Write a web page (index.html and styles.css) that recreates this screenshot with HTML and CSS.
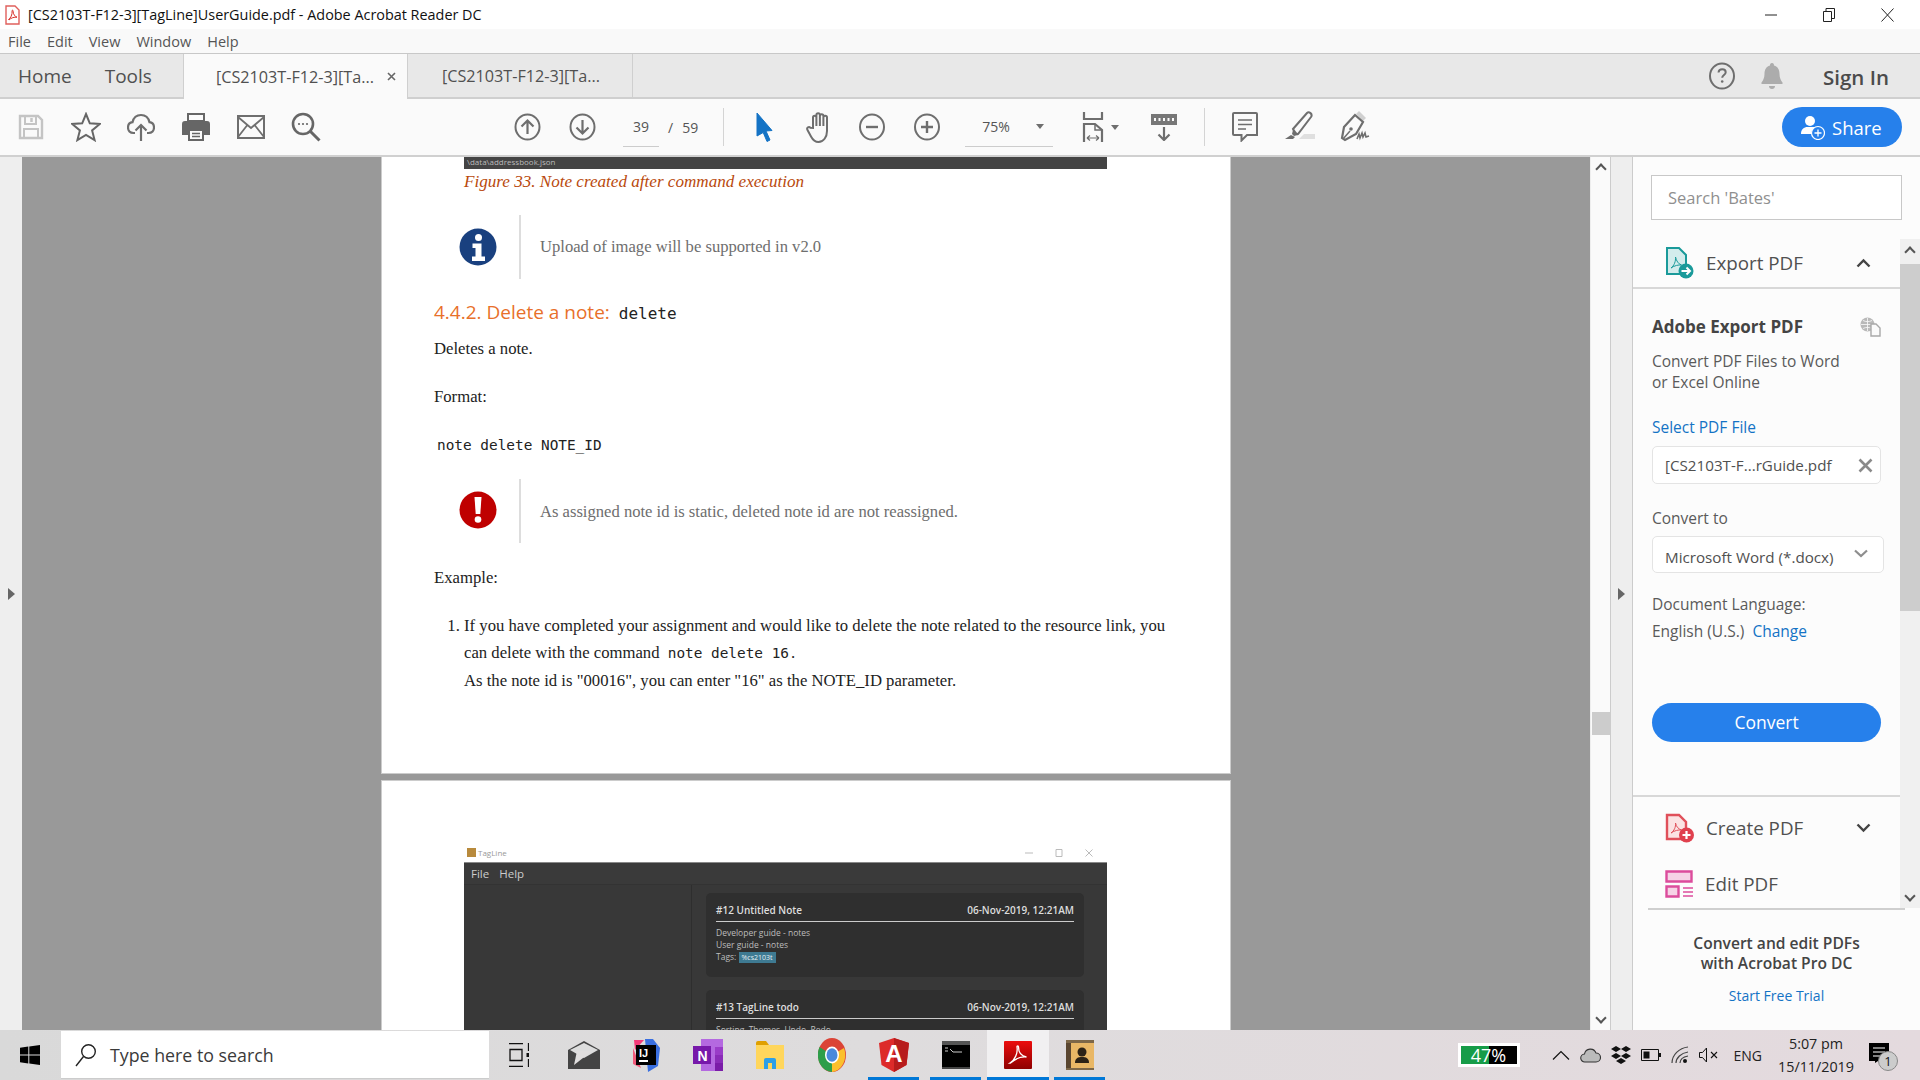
FILE: index.html
```html
<!DOCTYPE html>
<html lang="en">
<head>
    <meta charset="UTF-8">
    <title>[CS2103T-F12-3][TagLine]UserGuide.pdf - Adobe Acrobat Reader DC</title>
    <link rel="stylesheet" href="styles.css">
</head>
<body>
    <!-- Title bar -->
    <div class="titlebar">
        <svg class="app-icon" width="15" height="20" viewBox="0 0 15 20"><path d="M1 1h9l4 4v14H1z" fill="#fff" stroke="#e0605c" stroke-width="1.4"/><path d="M3.5 14.5c2-1 4-5 3.6-8.5-.2-1.200 1-1.200 1 .2 0 3 2 5.500 3.900 6-2.500-.3-6 .5-8 2.800z" fill="none" stroke="#d8322c" stroke-width="1"/></svg>
        <span class="title-text">[CS2103T-F12-3][TagLine]UserGuide.pdf - Adobe Acrobat Reader DC</span>
        <div class="win-controls">
            <svg width="12" height="12" viewBox="0 0 12 12"><path d="M0 6h12" stroke="#222" stroke-width="1"/></svg>
            <svg width="12" height="14" viewBox="0 0 12 14"><path d="M.5 3.500h8v10h-8zM3 3.500V.5h8.500v10H8.500" fill="none" stroke="#222"/></svg>
            <svg width="13" height="14" viewBox="0 0 13 14"><path d="M.5 .5l12 13M12.500 .5l-12 13" stroke="#222" stroke-width="1"/></svg>
        </div>
    </div>

    <!-- Menu bar -->
    <div class="menubar">
        <span>File</span><span>Edit</span><span>View</span><span>Window</span><span>Help</span>
    </div>

    <!-- Tab bar -->
    <div class="tabbar">
        <span class="nav-tab nav-home">Home</span>
        <span class="nav-tab nav-tools">Tools</span>
        <div class="doc-tab active">
            <span>[CS2103T-F12-3][Ta...</span>
            <svg class="tab-close" width="9" height="9" viewBox="0 0 9 9"><path d="M1 1l7 7M8 1l-7 7" stroke="#666" stroke-width="1.600"/></svg>
        </div>
        <div class="doc-tab second"><span>[CS2103T-F12-3][Ta...</span></div>
        <div class="tab-right">
            <svg width="26" height="28" viewBox="0 0 26 28"><ellipse cx="13" cy="14" rx="12" ry="12.500" fill="none" stroke="#6e6e6e" stroke-width="2"/><path d="M9.500 10.500c.3-2.500 2-3.300 3.700-3.300 2 0 3.500 1.200 3.500 3 0 2.800-3.500 2.800-3.500 5.600" fill="none" stroke="#6e6e6e" stroke-width="2"/><circle cx="13.200" cy="19.500" r="1.300" fill="#6e6e6e"/></svg>
            <svg class="bell" width="22" height="26" viewBox="0 0 22 26"><path d="M11 0c1.500 0 2 1 2 2.500 4 1 5.500 4.500 5.500 8.500 0 4 1.500 6.500 3 8.500v1.500H.5v-1.500c1.500-2 3-4.500 3-8.500S5 3.500 9 2.500C9 1 9.500 0 11 0zM8 23h6c0 2-1.300 3-3 3s-3-1-3-3z" fill="#a9a9a9"/></svg>
            <span class="sign-in">Sign In</span>
        </div>
    </div>

    <!-- Toolbar -->
    <div class="toolbar">
        <div class="tool-group">
            <span class="tool"><svg width="26" height="26" viewBox="0 0 26 26"><path d="M2 2h18l4 4v18H2z" fill="none" stroke="#c4c4c4" stroke-width="2.400"/><path d="M7 2v8h11V2M6 24v-9h14v9" fill="none" stroke="#c4c4c4" stroke-width="2"/><path d="M13.500 4v4" stroke="#c4c4c4" stroke-width="2.500"/></svg></span>
            <span class="tool"><svg width="30" height="30" viewBox="0 0 30 30"><path d="M15 2l3.800 9.300 10 .7-7.700 6.400 2.500 9.700L15 22.800l-8.600 5.300 2.500-9.700L1.200 12l10-.7z" fill="none" stroke="#666" stroke-width="2"/></svg></span>
            <span class="tool"><svg width="28" height="30" viewBox="0 0 28 30"><path d="M8 21H6.500C3 21 1 18.500 1 15.500c0-3 2-5 4.500-5.300C6.500 6 9.500 3 14 3s7.500 3 8.500 7.200c2.500.3 4.500 2.300 4.500 5.300s-2 5.500-5.500 5.500H20" fill="none" stroke="#6e6e6e" stroke-width="2.200"/><path d="M14 29V13M8.500 18.500L14 13l5.500 5.500" fill="none" stroke="#6e6e6e" stroke-width="2.200"/></svg></span>
            <span class="tool"><svg width="28" height="28" viewBox="0 0 28 28"><path d="M6 1h16v7H6z" fill="none" stroke="#666" stroke-width="2"/><path d="M3 8h22a3 3 0 0 1 3 3v11h-6v-6H6v6H0V11a3 3 0 0 1 3-3z" fill="#666"/><path d="M7 17h14v10H7z" fill="#fafafa" stroke="#666" stroke-width="2"/><path d="M10 20.500h8M10 23.500h8" stroke="#666" stroke-width="1.500"/></svg></span>
            <span class="tool"><svg width="28" height="24" viewBox="0 0 28 24"><path d="M1 1h26v22H1z" fill="none" stroke="#6e6e6e" stroke-width="2"/><path d="M1 2l13 11L27 2M1 22l9-11.500M27 22l-9-11.500" fill="none" stroke="#6e6e6e" stroke-width="1.800"/></svg></span>
            <span class="tool"><svg width="30" height="30" viewBox="0 0 30 30"><circle cx="12" cy="12" r="10" fill="none" stroke="#666" stroke-width="2.600"/><path d="M19 19l9.500 9.500" stroke="#666" stroke-width="3"/><circle cx="8" cy="12" r="1.100" fill="#666"/><circle cx="12" cy="12" r="1.100" fill="#666"/><circle cx="16" cy="12" r="1.100" fill="#666"/></svg></span>
        </div>
        <div class="tool-group page-nav">
            <span class="tool"><svg width="27" height="28" viewBox="0 0 27 28"><ellipse cx="13.500" cy="14" rx="12" ry="12.500" fill="none" stroke="#6e6e6e" stroke-width="2"/><path d="M13.500 21V7.500M7.500 13.500l6-6 6 6" fill="none" stroke="#6e6e6e" stroke-width="2.200"/></svg></span>
            <span class="tool"><svg width="27" height="28" viewBox="0 0 27 28"><ellipse cx="13.500" cy="14" rx="12" ry="12.500" fill="none" stroke="#6e6e6e" stroke-width="2"/><path d="M13.500 7v13.500M7.500 14.500l6 6 6-6" fill="none" stroke="#6e6e6e" stroke-width="2.200"/></svg></span>
            <span class="page-input">39</span>
            <span class="page-slash">/</span>
            <span class="page-total">59</span>
        </div>
        <span class="tool-sep first"></span>
        <div class="tool-group view-tools">
            <span class="tool"><svg width="18" height="30" viewBox="0 0 18 30"><path d="M1 1l15 17.500-6 .5 4 9-3 1.500-3.800-9L1 24z" fill="#1473c5" stroke="#1473c5" stroke-linejoin="round"/></svg></span>
            <span class="tool"><svg width="28" height="32" viewBox="0 0 28 32"><path d="M7 17V6.500c0-2.500 3.400-2.500 3.400 0V4c0-2.500 3.500-2.500 3.500 0v1c0-2.500 3.500-2.500 3.500 0v1.500c0-2.500 3.600-2.500 3.600 0V20c0 6-3.500 11-8.500 11-4 0-5.500-1.800-7.500-5.500L1.500 19c-1.300-2.500 1.500-4 3-2.200zM10.400 6.500V15M13.900 5v10M17.400 6.500V15" fill="none" stroke="#6e6e6e" stroke-width="2"/></svg></span>
            <span class="tool tool-minus"><svg width="26" height="28" viewBox="0 0 26 28"><ellipse cx="13" cy="14" rx="12" ry="12.500" fill="none" stroke="#6e6e6e" stroke-width="2"/><path d="M7 14h12" stroke="#6e6e6e" stroke-width="2.400"/></svg></span>
            <span class="tool"><svg width="26" height="28" viewBox="0 0 26 28"><ellipse cx="13" cy="14" rx="12" ry="12.500" fill="none" stroke="#6e6e6e" stroke-width="2"/><path d="M7 14h12M13 8v12" stroke="#6e6e6e" stroke-width="2.400"/></svg></span>
        </div>
        <div class="zoom-select"><span>75%</span><i class="caret"></i></div>
        <span class="fit-tool"><svg width="22" height="30" viewBox="0 0 22 30"><path d="M2 0v7h18V0" fill="none" stroke="#6e6e6e" stroke-width="2.200"/><path d="M2 30V12h11l7 6v12" fill="none" stroke="#6e6e6e" stroke-width="2.200"/><path d="M13 12v6h7" fill="none" stroke="#6e6e6e" stroke-width="1.500"/><path d="M5 26h12M5 26l3-2.500M5 26l3 2.500M17 26l-3-2.500M17 26l-3 2.500" fill="none" stroke="#6e6e6e" stroke-width="1.200"/></svg><i class="caret"></i></span>
        <span class="tool read-tool"><svg width="28" height="28" viewBox="0 0 28 28"><path d="M1 1h26v11H1z" fill="#777"/><path d="M5 5v3M9.500 5v3M14 5v3M18.500 5v3M23 5v3" stroke="#fafafa" stroke-width="2"/><path d="M14 14v13M8.500 21.500L14 27l5.500-5.500" fill="none" stroke="#6e6e6e" stroke-width="2.200"/></svg></span>
        <span class="tool-sep"></span>
        <div class="tool-group comment-tools">
            <span class="tool"><svg width="26" height="30" viewBox="0 0 26 30"><path d="M2 1h22a1 1 0 0 1 1 1v21H15l-5.500 5.500V23H2a1 1 0 0 1-1-1V2a1 1 0 0 1 1-1z" fill="none" stroke="#6e6e6e" stroke-width="2"/><path d="M6 8h14M6 12.500h14M6 17h8" stroke="#6e6e6e" stroke-width="1.500"/></svg></span>
            <span class="tool"><svg width="30" height="32" viewBox="0 0 30 32"><path d="M14 28h16v-5H19z" fill="#dfdfdf"/><path d="M8 18L22 2c2-2 6 1 4 4L13 23c-1 1-4-3-5-5z" fill="#fafafa" stroke="#6e6e6e" stroke-width="2"/><path d="M8 19l-1 4 2 2 4-1" fill="#6e6e6e"/><path d="M6 24l-6 4h8l2-2z" fill="#6e6e6e"/></svg></span>
            <span class="tool"><svg width="30" height="32" viewBox="0 0 30 32"><path d="M19 0l7 7-3 3-7-7z" fill="#d0d0d0"/><path d="M15 4l8 7-7 12-11 6-3-2L4 16z" fill="none" stroke="#6e6e6e" stroke-width="2.200"/><circle cx="11" cy="18" r="1.800" fill="#6e6e6e"/><path d="M3 28l7-8" stroke="#6e6e6e" stroke-width="1.500"/><path d="M17 28l2-5 1 4 2-5 1 4 2-4 1 4 3-1" fill="none" stroke="#6e6e6e" stroke-width="1.600"/></svg></span>
        </div>
        <div class="share-btn">
            <svg width="24" height="25" viewBox="0 0 24 25"><circle cx="9" cy="6" r="5" fill="#fff"/><path d="M0 19c0-5 3-6 5-7h8c1.500.6 2.500 1.300 3 2.500A7 7 0 0 0 11 19z" fill="#fff"/><circle cx="17" cy="18" r="6.500" fill="#2680eb" stroke="#fff" stroke-width="1.200"/><path d="M17 14.500v7M13.500 18h7" stroke="#fff" stroke-width="1.300"/></svg>
            <span>Share</span>
        </div>
    </div>

    <!-- Main area -->
    <div class="main">
        <div class="rail"><i class="arrow-right"></i></div>

        <div class="viewer">
            <div class="page first-page">
                <div class="shot-strip"><span>\data\addressbook.json</span></div>
                <div class="caption">Figure 33. Note created after command execution</div>

                <div class="admon info-admon">
                    <div class="admon-icon">
                        <svg width="38" height="38" viewBox="0 0 38 38"><circle cx="19" cy="19" r="18.500" fill="#19407f"/><circle cx="19.500" cy="9.500" r="3.500" fill="#fff"/><path d="M13.500 15.500h9v13h3.500v4.500H13v-4.500h3.500v-8.500h-3z" fill="#fff"/></svg>
                    </div>
                    <div class="admon-text">Upload of image will be supported in v2.0</div>
                </div>

                <h2 class="sect-head"><span>4.4.2. Delete a note:</span> <code>delete</code></h2>
                <p class="para deletes">Deletes a note.</p>
                <p class="para">Format:</p>
                <pre class="cmd">note delete NOTE_ID</pre>

                <div class="admon warn-admon">
                    <div class="admon-icon">
                        <svg width="38" height="38" viewBox="0 0 38 38"><circle cx="19" cy="19" r="18.500" fill="#bf0000"/><path d="M15.500 6h7l-1.200 17h-4.600z" fill="#fff"/><circle cx="19" cy="28.500" r="3.300" fill="#fff"/></svg>
                    </div>
                    <div class="admon-text">As assigned note id is static, deleted note id are not reassigned.</div>
                </div>

                <p class="para example">Example:</p>
                <ol class="steps">
                    <li>If you have completed your assignment and would like to delete the note related to the resource link, you can delete with the command <code>note delete 16</code>.<br>As the note id is "00016", you can enter "16" as the NOTE_ID parameter.</li>
                </ol>
            </div>

            <div class="page second-page">
                <div class="shot">
                    <div class="shot-title">
                        <i class="shot-logo"></i><span>TagLine</span>
                        <div class="shot-win">
                            <svg width="8" height="8" viewBox="0 0 8 8"><path d="M0 4h8" stroke="#bbb"/></svg>
                            <svg width="8" height="8" viewBox="0 0 8 8"><path d="M1 .5h6v7H1z" fill="none" stroke="#bbb"/></svg>
                            <svg width="8" height="8" viewBox="0 0 8 8"><path d="M.5 .5l7 7M7.500 .5l-7 7" stroke="#bbb"/></svg>
                        </div>
                    </div>
                    <div class="shot-menu"><span>File</span><span>Help</span></div>
                    <div class="shot-body">
                        <div class="shot-left"></div>
                        <div class="shot-right">
                            <div class="note-card">
                                <div class="note-head"><span>#12 Untitled Note</span><span>06-Nov-2019, 12:21AM</span></div>
                                <div class="note-line">Developer guide - notes</div>
                                <div class="note-line">User guide - notes</div>
                                <div class="note-line">Tags: <b class="note-tag">%cs2103t</b></div>
                            </div>
                            <div class="note-card">
                                <div class="note-head"><span>#13 TagLine todo</span><span>06-Nov-2019, 12:21AM</span></div>
                                <div class="note-line">Sorting, Themes, Undo, Redo</div>
                            </div>
                        </div>
                    </div>
                </div>
            </div>
        </div>

        <div class="v-scroll">
            <i class="chev-up"></i>
            <div class="v-thumb"></div>
            <i class="chev-down"></i>
        </div>
        <div class="strip"><i class="arrow-right"></i></div>

        <!-- Right panel -->
        <div class="panel">
            <div class="panel-search">Search 'Bates'</div>
            <div class="panel-scrollwrap">
                <div class="panel-body">
                    <div class="tool-row export-row">
                        <svg width="30" height="32" viewBox="0 0 30 32"><path d="M2 1h12l7 7v19H2z" fill="#d3ecec" stroke="#1a9a9a" stroke-width="2"/><path d="M6 21c3-2 5-7 4.500-11 .8 4 3 7 6 8-3-.3-7 .5-10.500 3z" fill="none" stroke="#1a9a9a" stroke-width="1"/><circle cx="21" cy="24" r="7.500" fill="#1a9a9a"/><path d="M16.500 24h8M21.500 20.500L25 24l-3.500 3.500" fill="none" stroke="#fff" stroke-width="2"/></svg>
                        <span class="row-label">Export PDF</span>
                        <svg class="row-chev" width="15" height="10" viewBox="0 0 15 10"><path d="M1.500 8.500l6-6 6 6" fill="none" stroke="#444" stroke-width="2.400"/></svg>
                    </div>
                    <div class="export-box">
                        <div class="export-head">
                            <span>Adobe Export PDF</span>
                            <svg width="21" height="20" viewBox="0 0 21 20"><circle cx="7.500" cy="7.500" r="7" fill="#b9b9b9"/><path d="M1 7.500h13M7.500 1v13M3 3.500c3 1.500 6 1.500 9 0M3 11.500c3-1.500 6-1.500 9 0" fill="none" stroke="#fafafa" stroke-width=".8"/><path d="M11 7h5l4 4v8h-9z" fill="#fafafa" stroke="#a8a8a8" stroke-width="1.400"/></svg>
                        </div>
                        <p class="export-desc">Convert PDF Files to Word<br>or Excel Online</p>
                        <div class="blue-link select-link">Select PDF File</div>
                        <div class="file-field">
                            <span>[CS2103T-F...rGuide.pdf</span>
                            <svg width="15" height="15" viewBox="0 0 15 15"><path d="M1.500 1.500l12 12M13.500 1.500l-12 12" stroke="#8a8a8a" stroke-width="2.600"/></svg>
                        </div>
                        <div class="field-label">Convert to</div>
                        <div class="file-field select-field">
                            <span>Microsoft Word (*.docx)</span>
                            <svg width="14" height="9" viewBox="0 0 14 9"><path d="M1 1.500l6 5.500 6-5.500" fill="none" stroke="#8e8e8e" stroke-width="2.200"/></svg>
                        </div>
                        <div class="lang-label">Document Language:</div>
                        <div class="lang-value">English (U.S.) <span class="blue-link">Change</span></div>
                        <div class="convert-btn">Convert</div>
                    </div>
                    <div class="tool-row create-row">
                        <svg width="30" height="30" viewBox="0 0 30 30"><path d="M2 2h12l7 7v17H2z" fill="#fbe3e3" stroke="#e0505a" stroke-width="2.400"/><path d="M6 20c3-2 5-6 4.500-10 .8 4 3 6 6 7-3-.3-7 .5-10.500 3z" fill="none" stroke="#e0505a" stroke-width="1"/><circle cx="21.500" cy="22" r="7.500" fill="#e0404e"/><path d="M17.500 22h8M21.500 18v8" stroke="#fff" stroke-width="2.200"/></svg>
                        <span class="row-label">Create PDF</span>
                        <svg class="row-chev" width="15" height="10" viewBox="0 0 15 10"><path d="M1.500 1.500l6 6 6-6" fill="none" stroke="#444" stroke-width="2.400"/></svg>
                    </div>
                    <div class="tool-row edit-row">
                        <svg width="29" height="28" viewBox="0 0 29 28"><path d="M1.500 1.500h25v10h-25zM1.500 16.500h12v10h-12z" fill="#f6d3e6" stroke="#dc4c9c" stroke-width="2.400"/><path d="M18 18h10M18 22h10M18 26h10" stroke="#dc4c9c" stroke-width="1.500"/></svg>
                        <span class="row-label">Edit PDF</span>
                    </div>
                </div>
                <div class="panel-scroll">
                    <i class="chev-up"></i>
                    <div class="panel-thumb"></div>
                    <i class="chev-down"></i>
                </div>
            </div>
            <div class="panel-foot">
                <div class="foot-title">Convert and edit PDFs<br>with Acrobat Pro DC</div>
                <div class="blue-link foot-link">Start Free Trial</div>
            </div>
        </div>
    </div>

    <!-- Taskbar -->
    <div class="taskbar">
        <svg class="win-logo" width="20" height="20" viewBox="0 0 20 20"><path d="M0 2.800l8.300-1.200v8H0zM9.300 1.500L20 0v9.600H9.300zM0 10.600h8.300v8L0 17.300zM9.300 10.600H20V20L9.300 18.500z" fill="#000"/></svg>
        <div class="task-search">
            <svg width="22" height="24" viewBox="0 0 22 24"><circle cx="13.500" cy="8.500" r="6.800" fill="none" stroke="#222" stroke-width="1.400"/><path d="M8.500 13.500L1 23" stroke="#222" stroke-width="1.400"/></svg>
            <span>Type here to search</span>
        </div>
        <div class="task-icons">
            <span class="task-item"><svg width="20" height="24" viewBox="0 0 20 24"><path d="M0 .5h14M0 23.500h14M1 6.500h12v11H1zM19.500 0v8M19.500 16v8" fill="none" stroke="#111" stroke-width="1.300"/><path d="M17.500 10h4v4h-4z" fill="#111"/></svg></span>
            <span class="task-item"><svg width="32" height="28" viewBox="0 0 32 28"><path d="M16 0l16 9v19H0V9z" fill="#444"/><path d="M2 9l14-7 14 7-14 8z" fill="#eee" opacity=".9"/><path d="M9 10h15L6 24z" fill="#e0dede"/></svg></span>
            <span class="task-item"><svg width="30" height="34" viewBox="0 0 30 34"><path d="M3 2h10L4 12z" fill="#f33a7a"/><path d="M2 10l8 20-8-4z" fill="#f05a7a"/><path d="M14 1h8l7 9-2 18-10 6z" fill="#3a6fe0"/><path d="M5 7h20v20H5z" fill="#000"/><path d="M8 23h9" stroke="#fff" stroke-width="2"/><text x="8" y="19" class="logo-ij">IJ</text></svg></span>
            <span class="task-item"><svg width="30" height="32" viewBox="0 0 30 32"><path d="M8 0h22v32H8z" fill="#b469e0"/><path d="M22 8h8v8h-8z" fill="#9a3cc8"/><path d="M22 16h8v8h-8z" fill="#8a2cb8"/><path d="M22 24h8v8h-8z" fill="#7a1ca8"/><path d="M0 7h18v18H0z" fill="#7719aa"/><text x="4.500" y="21.500" class="logo-n">N</text></svg></span>
            <span class="task-item"><svg width="28" height="28" viewBox="0 0 28 28"><path d="M0 2a2 2 0 0 1 2-2h8l3 4H0z" fill="#e0a000"/><path d="M0 4h28v24H0z" fill="#ffd65c"/><path d="M8 28V19a2 2 0 0 1 2-2h8a2 2 0 0 1 2 2v9h-4v-6h-4v6z" fill="#2d9fe8"/></svg></span>
            <span class="task-item"><svg width="28" height="34" viewBox="0 0 28 34"><ellipse cx="14" cy="17" rx="14" ry="17" fill="#db4437"/><path d="M14 17L26 10A14 17 0 0 1 14 34z" fill="#fbc02d"/><path d="M14 17L14 34A14 17 0 0 1 1.500 9z" fill="#2e9e4a"/><ellipse cx="14" cy="17" rx="7" ry="8.500" fill="#fff"/><ellipse cx="14" cy="17" rx="5.500" ry="6.800" fill="#4a89dc"/></svg></span>
            <span class="task-item"><svg width="30" height="34" viewBox="0 0 30 34"><path d="M15 0l15 5-2.500 22L15 34 2.500 27 0 5z" fill="#dd2a2a"/><path d="M15 0l15 5-2.500 22L15 34z" fill="#b71c1c"/><text x="15" y="24" class="logo-a">A</text></svg></span>
            <span class="task-item"><svg width="28" height="28" viewBox="0 0 28 28"><path d="M0 0h28v28H0z" fill="#000"/><path d="M0 0h28v4H0z" fill="#555"/><path d="M3 7h3M3 10h3M8 8l3 3h9" stroke="#ccc" stroke-width="1"/><path d="M0 27h28" stroke="#888"/></svg></span>
            <span class="task-item"><svg width="28" height="28" viewBox="0 0 28 28"><defs><linearGradient id="acroGrad" x1="0" y1="0" x2="0" y2="1"><stop offset="0" stop-color="#ec0d0d"/><stop offset="1" stop-color="#8e0000"/></linearGradient></defs><rect width="28" height="28" rx="1" fill="url(#acroGrad)"/><path d="M6 22c5-3 8-10 7-16-.2-1.500 1.500-1.500 1.500 0 0 5 3 9 8 10-5-.5-11 1.500-16 6z" fill="none" stroke="#fff" stroke-width="1.300"/></svg></span>
            <span class="task-item"><svg width="28" height="30" viewBox="0 0 28 30"><path d="M0 0h28v30H0z" fill="#e9b766"/><path d="M0 0h5v30H0z" fill="#5a4630"/><path d="M0 0h28v3H0zM0 28h28v2H0z" fill="#7d6748"/><circle cx="16" cy="12" r="4.500" fill="#2c2216"/><path d="M9 23c0-5 3-6 7-6s7 1 7 6z" fill="#2c2216"/></svg></span>
        </div>
        <div class="tray">
            <div class="meter"><span class="meter-fill"></span><span class="meter-text">47%</span></div>
            <div class="tray-icons">
                <svg width="18" height="10" viewBox="0 0 18 10"><path d="M1 9.500l8-8 8 8" fill="none" stroke="#111" stroke-width="1.200"/></svg>
                <svg width="21" height="16" viewBox="0 0 21 16"><path d="M5 15a4 4 0 0 1-.5-8A6 6 0 0 1 16 6a4.500 4.500 0 0 1 0 9z" fill="#bbb" stroke="#333" stroke-width="1.100"/></svg>
                <svg width="20" height="20" viewBox="0 0 20 20"><path d="M5 1l5 3-5 3-5-3zM15 1l5 3-5 3-5-3zM5 8l5 3-5 3-5-3zM15 8l5 3-5 3-5-3zM10 13l5 3-5 3-5-3z" fill="#111"/></svg>
                <svg width="20" height="12" viewBox="0 0 20 12"><path d="M.5 .5h17v11H.5z" fill="none" stroke="#111"/><path d="M2.500 2.500h6v7h-6z" fill="#111"/><path d="M18 4h2v4h-2z" fill="#111"/></svg>
                <svg width="18" height="18" viewBox="0 0 18 18"><path d="M1 17C1 9 8 2 17 1M5 17c0-5 5-10 12-11M9 17c0-3 3-6 8-7" fill="none" stroke="#444" stroke-width="1.200"/><circle cx="14" cy="15" r="2" fill="#111"/></svg>
                <svg width="20" height="16" viewBox="0 0 20 16"><path d="M.5 5.500h3l4-4.500v14l-4-4.500h-3z" fill="none" stroke="#111"/><path d="M12 5l6 6M18 5l-6 6" stroke="#111" stroke-width="1.100"/></svg>
            </div>
            <span class="tray-lang">ENG</span>
            <div class="tray-clock"><span>5:07 pm</span><span>15/11/2019</span></div>
            <div class="tray-note">
                <svg width="20" height="20" viewBox="0 0 20 20"><path d="M0 0h20v18H9l-3 2v-2H0z" fill="#000"/><path d="M4 5h12M4 9h12M4 13h12" stroke="#fff" stroke-width="1.200"/></svg>
                <span class="note-badge">1</span>
            </div>
        </div>
    </div>
</body>
</html>
```

FILE: styles.css
```css
* {
    box-sizing: border-box;
}
body {
    margin: 0;
    width: 1920px;
    height: 1080px;
    overflow: hidden;
    display: flex;
    flex-direction: column;
    font-family: "Open Sans", sans-serif;
    background-color: #fff;
    color: #444;
}
svg {
    display: block;
    flex-shrink: 0;
}

/* title + menu */
.titlebar {
    height: 29px;
    display: flex;
    align-items: center;
    padding-left: 5px;
    background-color: #fff;
}
.title-text {
    margin-left: 8px;
    font-size: 14.4px;
    color: #111;
}
.win-controls {
    margin-left: auto;
    display: flex;
    align-items: center;
    gap: 46px;
    padding-right: 26px;
}
.menubar {
    height: 25px;
    display: flex;
    align-items: center;
    gap: 16px;
    padding-left: 8px;
    background-color: #f9f9f9;
    border-bottom: 1px solid #c8c8c8;
    font-size: 14.5px;
    color: #555;
}

/* tabs */
.tabbar {
    height: 45px;
    display: flex;
    align-items: center;
    background-color: #e8e8e8;
    border-bottom: 2px solid #cfcfcf;
}
.nav-tab {
    font-size: 19px;
    color: #505050;
}
.nav-home {
    margin-left: 18px;
}
.nav-tools {
    margin-left: 33px;
}
.doc-tab {
    height: 45px;
    display: flex;
    align-items: center;
    font-size: 16.2px;
    color: #505050;
    border-left: 1px solid #cfcfcf;
    border-right: 1px solid #cfcfcf;
}
.doc-tab.active {
    margin-left: 31px;
    width: 225px;
    padding-left: 32px;
    background-color: #fafafa;
    margin-bottom: -2px;
}
.tab-close {
    margin-left: 13px;
}
.doc-tab.second {
    width: 225px;
    padding-left: 34px;
    border-left: 0;
    margin-bottom: -1px;
}
.tab-right {
    margin-left: auto;
    display: flex;
    align-items: center;
    padding-right: 31px;
}
.bell {
    margin-left: 26px;
    opacity: .95;
}
.sign-in {
    margin-left: 40px;
    padding-top: 2px;
    font-size: 20.5px;
    font-weight: 600;
    color: #4b4b4b;
}

/* toolbar */
.toolbar {
    height: 58px;
    display: flex;
    align-items: center;
    background-color: #fafafa;
    border-bottom: 2px solid #d0d0d0;
    flex-shrink: 0;
}
.tool-group {
    display: flex;
    align-items: center;
}
.tool {
    width: 55px;
    display: flex;
    justify-content: center;
}
.tool-group:first-child {
    margin-left: 3px;
}
.page-nav {
    margin-left: 167px;
    font-size: 14px;
    color: #555;
}
.page-input {
    width: 36px;
    margin-left: 13px;
    padding-bottom: 10px;
    padding-top: 10px;
    text-align: center;
    border-bottom: 1px solid #ccc;
}
.page-slash {
    margin-left: 9px;
}
.page-total {
    margin-left: 9px;
}
.tool-sep {
    width: 1px;
    height: 38px;
    background-color: #d4d4d4;
    margin-left: 13px;
}
.tool-sep.first {
    margin-left: 25px;
}
.view-tools {
    margin-left: 13px;
}
.tool-minus {
    margin-left: -3px;
}
.zoom-select {
    margin-left: 11px;
    width: 88px;
    display: flex;
    align-items: center;
    padding: 10px 0 10px 17px;
    border-bottom: 1px solid #ccc;
    font-size: 14px;
    color: #555;
}
.caret {
    width: 0;
    height: 0;
    margin-left: auto;
    margin-right: 9px;
    border-left: 4px solid transparent;
    border-right: 4px solid transparent;
    border-top: 5px solid #6e6e6e;
}
.fit-tool {
    margin-left: 29px;
    display: flex;
    align-items: center;
}
.fit-tool .caret {
    margin: 0 0 0 7px;
}
.read-tool {
    margin-left: 17px;
}
.comment-tools {
    margin-left: 12px;
}
.share-btn {
    margin-left: auto;
    margin-right: 18px;
    width: 120px;
    height: 40px;
    display: flex;
    align-items: center;
    padding-left: 19px;
    gap: 7px;
    border-radius: 20px;
    background-color: #2680eb;
    color: #fff;
    font-size: 18.5px;
    font-weight: 500;
}

/* main area */
.main {
    flex: 1;
    display: flex;
    min-height: 0;
}
.rail {
    width: 22px;
    display: flex;
    align-items: center;
    justify-content: center;
    background-color: #eee;
}
.arrow-right {
    width: 0;
    height: 0;
    border-top: 6px solid transparent;
    border-bottom: 6px solid transparent;
    border-left: 7px solid #666;
}
.viewer {
    flex: 1;
    display: flex;
    flex-direction: column;
    align-items: center;
    gap: 6px;
    overflow: hidden;
    background-color: #999;
}
.page {
    width: 850px;
    flex-shrink: 0;
    background-color: #fff;
    border: 1px solid #ccc;
    border-top: 0;
}
.first-page {
    height: 617px;
    padding-left: 52px;
    color: #222;
    font-family: "Liberation Serif", serif;
    font-size: 16.7px;
}
.second-page {
    height: 260px;
    padding: 62px 0 0 82px;
    border-top: 1px solid #ccc;
}

/* page text */
.shot-strip {
    width: 643px;
    height: 12px;
    margin-left: 30px;
    padding-left: 3px;
    background-color: #444;
    color: #bbb;
    font-family: "Open Sans", sans-serif;
    font-size: 8px;
    line-height: 9px;
}
.caption {
    margin-left: 30px;
    height: 26px;
    line-height: 26px;
    font-style: italic;
    color: #b9490c;
    font-size: 17.1px;
}
.admon {
    margin-left: -52px;
    margin-top: 20px;
    height: 64px;
    display: flex;
    align-items: center;
}
.warn-admon {
    margin-top: 22px;
}
.admon-icon {
    width: 139px;
    height: 64px;
    padding-left: 77px;
    display: flex;
    align-items: center;
    border-right: 2px solid #ddd;
}
.admon-text {
    padding-left: 19px;
    color: #6e6e6e;
    font-size: 16.6px;
}
.warn-admon .admon-text {
    padding-top: 2px;
}
.warn-admon svg {
    margin-top: -2px;
}
.sect-head {
    margin: 18px 0 0;
    height: 30px;
    line-height: 30px;
    font-weight: 400;
    font-size: 19px;
    font-family: "Open Sans", sans-serif;
    color: #e8702a;
}
.sect-head code {
    font-family: "DejaVu Sans Mono", monospace;
    font-size: 16px;
    color: #222;
    margin-left: 4px;
}
.para {
    margin: 24px 0 0;
    height: 24px;
    line-height: 24px;
}
.deletes {
    margin-top: 10px;
}
.example {
    margin-top: 23px;
}
.cmd {
    margin: 24px 0 0 3px;
    height: 24px;
    line-height: 24px;
    font-family: "DejaVu Sans Mono", monospace;
    font-size: 14.4px;
    color: #222;
}
.steps {
    width: 740px;
    margin: 22px 0 0;
    padding-left: 30px;
    line-height: 27px;
}
.steps code {
    font-family: "DejaVu Sans Mono", monospace;
    font-size: 14.4px;
    margin: 0 2px 0 4px;
}

/* screenshot on page 2 */
.shot {
    width: 643px;
    color: #ccc;
    font-family: "Open Sans", sans-serif;
}
.shot-title {
    height: 19px;
    display: flex;
    align-items: center;
    font-size: 8px;
    color: #999;
    padding: 0 14px 0 3px;
    gap: 2px;
    background-color: #fff;
}
.shot-logo {
    width: 9px;
    height: 9px;
    background-color: #b88a3c;
}
.shot-win {
    margin-left: auto;
    display: flex;
    gap: 22px;
}
.shot-menu {
    height: 23px;
    display: flex;
    align-items: center;
    gap: 10px;
    padding-left: 7px;
    font-size: 11.5px;
    background-color: #3a3a3a;
    border-top: 1px solid #888;
    border-bottom: 1px solid #333;
}
.shot-body {
    display: flex;
    height: 160px;
    background-color: #383838;
}
.shot-left {
    width: 228px;
    border-right: 1px solid #2e2e2e;
}
.shot-right {
    flex: 1;
    padding: 8px 23px 0 14px;
}
.note-card {
    height: 84px;
    margin-bottom: 13px;
    padding: 10px 10px 9px;
    border-radius: 5px;
    background-color: #2f2f2f;
    font-size: 8.5px;
    color: #bdbdbd;
}
.note-head {
    display: flex;
    justify-content: space-between;
    padding-bottom: 4px;
    margin-bottom: 5px;
    border-bottom: 1px solid #ccc;
    font-size: 10px;
    font-weight: 600;
    color: #ddd;
    line-height: 14px;
}
.note-line {
    line-height: 12px;
}
.note-tag {
    padding: 1px 3px;
    font-weight: 400;
    font-size: 7px;
    color: #e4eef2;
    background-color: #3e7a92;
}

/* scrollbars */
.v-scroll {
    width: 20px;
    display: flex;
    flex-direction: column;
    align-items: center;
    padding: 5px 0;
    background-color: #fafafa;
    border-left: 1px solid #eee;
}
.chev-up,
.chev-down {
    width: 8px;
    height: 8px;
    border-left: 2px solid #555;
    border-top: 2px solid #555;
    transform: rotate(45deg);
    margin-top: 3px;
}
.chev-down {
    transform: rotate(225deg);
    margin-top: auto;
    margin-bottom: 3px;
}
.v-thumb {
    width: 18px;
    height: 23px;
    margin-top: 539px;
    background-color: #ccc;
}
.strip {
    width: 23px;
    display: flex;
    align-items: center;
    justify-content: center;
    background-color: #eee;
    border-left: 1px solid #ccc;
    border-right: 1px solid #ccc;
}

/* right panel */
.panel {
    width: 287px;
    display: flex;
    flex-direction: column;
    background-color: #fcfcfc;
}
.panel-search {
    height: 45px;
    margin: 18px 18px 19px;
    padding-left: 16px;
    line-height: 43px;
    border: 1px solid #c8c8c8;
    background-color: #fff;
    font-size: 16.5px;
    color: #8f8f8f;
}
.panel-scrollwrap {
    height: 669px;
    display: flex;
}
.panel-body {
    flex: 1;
    min-width: 0;
}
.panel-scroll {
    width: 20px;
    display: flex;
    flex-direction: column;
    align-items: center;
    padding-top: 6px;
    padding-bottom: 5px;
    background-color: #f0f0f0;
}
.panel-thumb {
    width: 20px;
    height: 347px;
    margin-top: 8px;
    background-color: #cdcdcd;
}
.tool-row {
    display: flex;
    align-items: center;
    height: 50px;
    padding-left: 32px;
}
.export-row {
    border-bottom: 2px solid #d8d8d8;
}
.row-label {
    margin-left: 11px;
    font-size: 18.8px;
    color: #505050;
}
.row-chev {
    margin-left: auto;
    margin-right: 29px;
}
.export-box {
    height: 508px;
    padding: 27px 0 0 19px;
    border-bottom: 2px solid #d8d8d8;
    font-size: 15.5px;
    color: #5a5a5a;
}
.export-head {
    display: flex;
    align-items: center;
    justify-content: space-between;
    width: 229px;
    font-size: 17px;
    font-weight: 700;
    color: #444;
    line-height: 22px;
}
.export-desc {
    margin: 13px 0 0;
    line-height: 21px;
}
.blue-link {
    color: #1473c5;
}
.select-link {
    margin-top: 24px;
    line-height: 21px;
}
.file-field {
    width: 229px;
    height: 38px;
    margin-top: 8px;
    display: flex;
    align-items: center;
    justify-content: space-between;
    padding: 0 7px 0 12px;
    background-color: #fff;
    border: 1px solid #e4e4e4;
    border-radius: 5px;
    font-size: 15.2px;
    color: #505050;
}
.field-label {
    margin-top: 24px;
    line-height: 21px;
}
.select-field {
    width: 232px;
    height: 37px;
    margin-top: 7px;
    padding-right: 15px;
}
.select-field span {
    padding-top: 5px;
}
.select-field svg {
    margin-top: -3px;
}
.lang-label {
    margin-top: 21px;
    line-height: 21px;
}
.lang-value {
    margin-top: 6px;
    line-height: 21px;
}
.lang-value .blue-link {
    margin-left: 4px;
}
.convert-btn {
    width: 229px;
    height: 39px;
    margin-top: 61px;
    border-radius: 20px;
    background-color: #2680eb;
    color: #fff;
    text-align: center;
    line-height: 38px;
    font-size: 17.5px;
}
.create-row {
    margin-top: 6px;
}
.edit-row {
    margin-top: 13px;
    height: 36px;
}
.panel-foot {
    flex: 1;
    margin-left: 15px;
    margin-right: 15px;
    padding-top: 23px;
    border-top: 2px solid #cfcfcf;
    text-align: center;
    font-size: 15.6px;
}
.foot-title {
    font-weight: 600;
    line-height: 20px;
    color: #444;
}
.foot-link {
    margin-top: 13px;
    font-size: 14px;
    line-height: 20px;
}

/* taskbar */
.taskbar {
    height: 50px;
    flex-shrink: 0;
    display: flex;
    align-items: center;
    background: linear-gradient(to right, #d9d9d9, #dedcdd 45%, #e4dade);
}
.win-logo {
    margin-left: 20px;
}
.task-search {
    width: 428px;
    height: 48px;
    margin-left: 21px;
    padding-left: 14px;
    display: flex;
    align-items: center;
    gap: 13px;
    background-color: #fff;
    font-size: 17.8px;
    color: #3a3a3a;
    border-bottom: 1px solid #ccc;
}
.task-icons {
    display: flex;
    height: 50px;
}
.task-item {
    width: 62px;
    height: 50px;
    display: flex;
    align-items: center;
    justify-content: center;
}
.task-item:first-child {
    width: 64px;
    padding-right: 4px;
}
.task-item:nth-child(7),
.task-item:nth-child(8),
.task-item:nth-child(10) {
    border-left: 5px solid transparent;
    border-right: 6px solid transparent;
    background: linear-gradient(#0078d7, #0078d7) bottom / 100% 3px no-repeat;
    background-clip: padding-box;
}
.task-item:nth-child(9) {
    background-color: #f1f0f1;
    box-shadow: inset 0 -3px 0 #0078d7;
}
.logo-ij {
    font-family: "Liberation Sans", sans-serif;
    font-size: 11px;
    font-weight: 700;
    fill: #fff;
}
.logo-n {
    font-family: "Liberation Sans", sans-serif;
    font-size: 14px;
    font-weight: 700;
    fill: #fff;
}
.logo-a {
    font-family: "Liberation Sans", sans-serif;
    font-size: 24px;
    font-weight: 700;
    fill: #fff;
    text-anchor: middle;
}
.tray {
    margin-left: auto;
    display: flex;
    align-items: center;
}
.meter {
    position: relative;
    width: 62px;
    height: 24px;
    border: 3px solid #fff;
    background-color: #000;
    display: flex;
    align-items: center;
    justify-content: center;
    color: #fff;
    font-size: 18px;
}
.meter-fill {
    position: absolute;
    left: 0;
    top: 0;
    bottom: 0;
    width: 50%;
    background-color: #169c48;
}
.meter-text {
    position: relative;
}
.tray-icons {
    margin-left: 32px;
    display: flex;
    align-items: center;
    gap: 10px;
}
.tray-lang {
    margin-left: 15px;
    font-size: 14px;
    color: #222;
}
.tray-clock {
    margin-left: 14px;
    width: 80px;
    display: flex;
    flex-direction: column;
    align-items: center;
    gap: 3px;
    font-size: 14.3px;
    line-height: 20px;
    color: #222;
}
.tray-note {
    position: relative;
    margin-left: 13px;
    margin-right: 31px;
    margin-top: -4px;
}
.note-badge {
    position: absolute;
    left: 9px;
    top: 8px;
    width: 20px;
    height: 20px;
    border-radius: 50%;
    background-color: #ccc;
    border: 1px solid #888;
    text-align: center;
    line-height: 18px;
    font-size: 13px;
    color: #111;
}
```
